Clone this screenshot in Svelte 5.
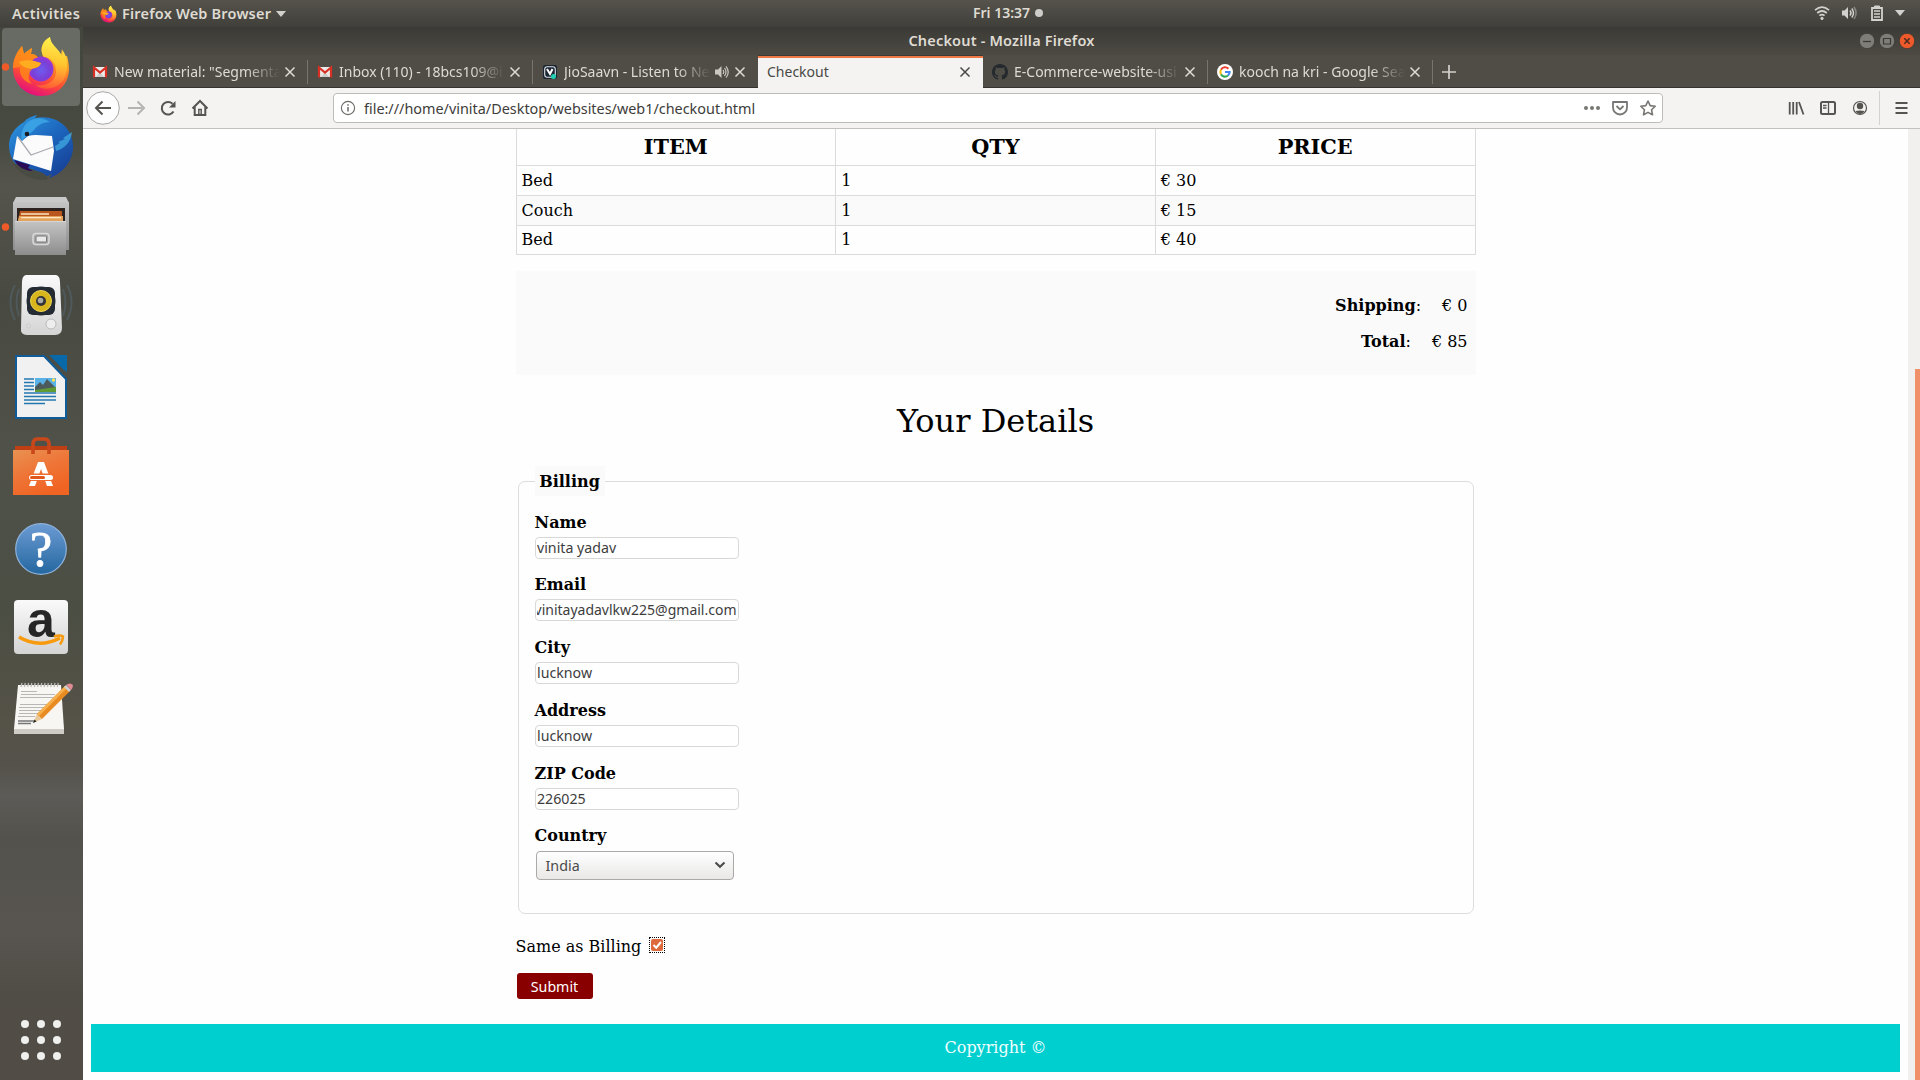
<script>
  const rows = [
    ['Bed', '1', '€ 30'],
    ['Couch', '1', '€ 15'],
    ['Bed', '1', '€ 40']
  ];
  const fields = [
    { label: 'Name', value: 'vinita yadav' },
    { label: 'Email', value: 'vinitayadavlkw225@gmail.com', end: true },
    { label: 'City', value: 'lucknow' },
    { label: 'Address', value: 'lucknow' },
    { label: 'ZIP Code', value: '226025' }
  ];
  const tabs = [
    { icon: 'gmail', title: 'New material: "Segmenta' },
    { icon: 'gmail', title: 'Inbox (110) - 18bcs109@i' },
    { icon: 'saavn', title: 'JioSaavn - Listen to Ne', audio: true },
    { title: 'Checkout', active: true },
    { icon: 'github', title: 'E-Commerce-website-usi' },
    { icon: 'google', title: 'kooch na kri - Google Sea' }
  ];
  const dots = [25, 41, 57];
  const spirals = Array.from({ length: 12 }, (_, i) => 21 + i * 3.3);
</script>

{#snippet firefox()}
  <path fill="url(#fxBody)" d="M41 96C27 96 13 85 13 68c0-8 3-15 9-22l2 8c3-3 5-4 8-6l-1 6c4 0 5 1 7 4l5-1c-3-9-1-16 7-20 0 7 7 12 11 18l1-6 3 7 2 0c2 7 2 12 2 14-1 15-12 26-28 26z" />
  <path fill="url(#fxTail)" d="M50 37c-8 5-11 13-6 20 7 0 13 7 12 16-1 9-11 14-20 12 8 7 24 4 29-8 4-10 2-21-2-26l-1 5C59 49 50 44 50 37z" />
  <circle cx="41" cy="69" r="12.5" fill="url(#fxGlobe)" />
  <path fill="#ff8a18" d="M13 68c0-8 3-15 9-22l2 8c3-3 5-4 8-6l-1 6c3 0 6 2 7 4-4 0-7 2-4 4l7 1c-1 4-5 5-9 6-4 5-5 10 0 15-10-3-13-11-12-17z" opacity=".8" />
  <path fill="#ffad20" d="M19 62c6-3 15-2 22 1-1 4-6 5-10 6-5-1-10-3-12-7z" />
{/snippet}

{#snippet triangle()}
  <svg class="tri" width="10" height="6" viewBox="0 0 10 6"><path d="M0 0h10L5 6z" fill="#d3d1cd" /></svg>
{/snippet}

{#snippet favicon(name)}
  {#if name === 'gmail'}
    <svg class="fav" width="16" height="16" viewBox="0 0 16 16">
      <path fill="#eceae8" d="M1 3h14v10H1z" /><path fill="#cfcdcb" d="M4 13l4-5 4 5z" />
      <path fill="none" stroke="#d93025" stroke-width="2.2" d="M2 13.5V3.5l6 5 6-5v10" />
    </svg>
  {:else if name === 'saavn'}
    <svg class="fav" width="16" height="16" viewBox="0 0 16 16">
      <rect x="1" y="1" width="14" height="14" rx="2" fill="#1c2533" />
      <rect x="2.7" y="2.7" width="10.6" height="10.6" rx="2.5" fill="none" stroke="#dbe3e8" stroke-width="1.1" />
      <path fill="none" stroke="#fff" stroke-width="2" d="M5 5l3 5 2.500-5" /><circle cx="11.500" cy="12.500" r="2.500" fill="#1ecfb2" />
    </svg>
  {:else if name === 'github'}
    <svg class="fav" width="16" height="16" viewBox="0 0 16 16">
      <path fill="#24292e" d="M8 0C3.58 0 0 3.58 0 8c0 3.54 2.29 6.53 5.47 7.59.4.07.55-.17.55-.38 0-.19-.01-.82-.01-1.49-2.01.37-2.53-.49-2.69-.94-.09-.23-.48-.94-.82-1.13-.28-.15-.68-.52-.01-.53.63-.01 1.08.58 1.23.82.72 1.21 1.87.87 2.33.66.07-.52.28-.87.51-1.07-1.78-.2-3.64-.89-3.64-3.95 0-.87.31-1.59.82-2.15-.08-.2-.36-1.02.08-2.12 0 0 .67-.21 2.2.82a7.6 7.6 0 0 1 4 0c1.53-1.04 2.2-.82 2.2-.82.44 1.1.16 1.92.08 2.12.51.56.82 1.27.82 2.15 0 3.07-1.87 3.75-3.65 3.95.29.25.54.73.54 1.48 0 1.07-.01 1.93-.01 2.2 0 .21.15.46.55.38A8 8 0 0 0 16 8c0-4.42-3.58-8-8-8z" />
    </svg>
  {:else if name === 'google'}
    <svg class="fav" width="16" height="16" viewBox="0 0 16 16">
      <circle cx="8" cy="8" r="8" fill="#fff" />
      <g fill="none" stroke-width="2.1">
        <path stroke="#ea4335" d="M11.4 4.7A4.6 4.6 0 0 0 4 5.7" /><path stroke="#fbbc05" d="M4 5.7a4.6 4.6 0 0 0 0 4.7" />
        <path stroke="#34a853" d="M4 10.4a4.6 4.6 0 0 0 7 1.1" /><path stroke="#4285f4" d="M11 11.5A4.6 4.6 0 0 0 12.6 8H8" />
      </g>
    </svg>
  {/if}
{/snippet}

<svg width="0" height="0" class="defs">
  <defs>
    <linearGradient id="fxBody" x1=".8" y1="0" x2=".4" y2="1">
      <stop offset="0" stop-color="#ffe846" /><stop offset=".4" stop-color="#ff9a20" /><stop offset=".72" stop-color="#ff4a36" /><stop offset="1" stop-color="#e4107c" />
    </linearGradient>
    <linearGradient id="fxTail" x1=".5" y1="0" x2=".4" y2="1">
      <stop offset="0" stop-color="#fff14f" /><stop offset=".5" stop-color="#ffc52e" /><stop offset="1" stop-color="#ff5a35" />
    </linearGradient>
    <radialGradient id="fxGlobe" cx=".5" cy=".55" r=".6">
      <stop offset="0" stop-color="#6f5cf0" /><stop offset=".6" stop-color="#7a3fd6" /><stop offset="1" stop-color="#a832d8" />
    </radialGradient>
    <linearGradient id="tb" x1="0" y1="0" x2=".8" y2="1">
      <stop offset="0" stop-color="#2f9be0" /><stop offset=".5" stop-color="#1d68c0" /><stop offset="1" stop-color="#173f95" />
    </linearGradient>
    <linearGradient id="steel" x1="0" y1="0" x2="0" y2="1"><stop offset="0" stop-color="#c4c4c4" /><stop offset="1" stop-color="#8d8d8d" /></linearGradient>
    <linearGradient id="pale" x1="0" y1="0" x2="0" y2="1"><stop offset="0" stop-color="#fafafa" /><stop offset="1" stop-color="#d4d4d4" /></linearGradient>
    <linearGradient id="bag" x1="0" y1="0" x2=".5" y2="1"><stop offset="0" stop-color="#e89252" /><stop offset=".5" stop-color="#ee7638" /><stop offset="1" stop-color="#f06423" /></linearGradient>
    <linearGradient id="help" x1="0" y1="0" x2="0" y2="1"><stop offset="0" stop-color="#6c9bd3" /><stop offset="1" stop-color="#2467a0" /></linearGradient>
  </defs>
</svg>

<div class="desktop">
  <header class="topbar">
    <span class="act">Activities</span>
    <span class="app">
      <svg width="17" height="20" viewBox="11 35 60 62">{@render firefox()}</svg>
      <span class="appname">Firefox Web Browser</span>
      {@render triangle()}
    </span>
    <span class="clock">Fri 13:37 <i></i></span>
    <span class="status">
      <svg width="16" height="16" viewBox="0 0 16 16" fill="none" stroke="#d3d1cd" stroke-width="1.7">
        <path d="M1 5.2q7-6 14 0M3.2 8q4.8-4 9.6 0M5.4 10.6q2.6-2 5.2 0" /><circle cx="8" cy="13.4" r="1.2" fill="#d3d1cd" stroke-width="1" />
      </svg>
      <svg width="16" height="16" viewBox="0 0 16 16" fill="none" stroke="#d3d1cd" stroke-width="1.5">
        <path d="M1 5.5h2.5L7 2v12L3.5 10.5H1z" fill="#d3d1cd" stroke="none" /><path d="M9 5.5q2 2.5 0 5M10.8 3.5q3.4 4.5 0 9" /><path d="M13 2q4.2 6 0 12" opacity=".45" />
      </svg>
      <svg class="battery" width="14" height="16" viewBox="0 0 14 16" fill="none" stroke="#d3d1cd">
        <path d="M2 3h10v12H2z" stroke-width="1.8" /><path d="M4.5 1h5v1.500h-5z" fill="#d3d1cd" /><path d="M4 6h6M4 9h6M4 12h6" stroke-width="1.500" />
      </svg>
      {@render triangle()}
    </span>
  </header>

  <div class="body">
    <nav class="dock">
      <svg width="83" height="80" viewBox="0 27 83 80">
        <rect x="2" y="28" width="78" height="78" rx="4" fill="#fff" fill-opacity=".2" />
        <circle cx="5.500" cy="67" r="3.700" fill="#ef5a28" />
        {@render firefox()}
      </svg>
      <svg width="83" height="80" viewBox="0 107 83 80">
        <path fill="url(#tb)" d="M24 122c3-4 8-6 13-7l-2 3c20-4 37 8 38 27 1 13-8 28-24 33l3-4-7 3c-18 0-36-11-36-32 0-9 6-18 15-23z" />
        <path fill="#494c43" d="M13 163l30 10 6 5-4 2c-14 0-26-6-32-17z" />
        <path fill="#2b0b55" d="M14 160l16 5-2 3 5 3c-8 0-15-4-19-11z" />
        <path fill="#fbfbfc" d="M17 136l5 5 6-5c8-2 16 0 24 0l2 15-3 20-38-12z" />
        <path fill="none" stroke="#a9abb0" stroke-width="1.300" d="M18 137l13 18 22-8" />
        <path fill="#3fa9e8" d="M22 141c-2-6 0-14 6-19 8-6 15-4 22 0-8 0-13 4-16 8-5 5-9 6-12 11z" opacity=".8" />
        <path fill="#43b0e6" d="M72 132l-9 6 2 1-7 3 2 1-5 3 1 5c10-3 15-10 16-19z" opacity=".7" />
        <circle cx="27" cy="134" r="2.300" fill="#1a1a22" />
      </svg>
      <svg width="83" height="80" viewBox="0 187 83 80">
        <circle cx="5.500" cy="227" r="3.700" fill="#ef5a28" />
        <path fill="#c9c9c9" d="M16 197h50l3 6H13z" /><path fill="url(#steel)" d="M13 202h56v48H13z" />
        <path fill="#2c2320" d="M17 208h48v14H17z" /><path fill="#b8561e" d="M20 211h42v10H18z" /><path fill="#e3a35c" d="M19 216h44v5H18z" />
        <path stroke="#fbe6c0" stroke-width="1.400" d="M21 217.600h40M21 214h28" />
        <path fill="url(#steel)" d="M15 221h51v34H15z" /><path stroke="#d5d5d5" d="M15 221.500h51" />
        <rect x="33" y="233.500" width="16" height="11" rx="3" fill="none" stroke="#d9d9d9" stroke-width="1.500" /><rect x="36" y="236" width="10.500" height="6" rx="1" fill="#e8e8e8" stroke="#777" />
      </svg>
      <svg width="83" height="80" viewBox="0 267 83 80">
        <g fill="none" stroke="#5d7893" stroke-width="2" opacity=".32"><path d="M15 285q-9 17 0 35M67 285q9 17 0 35M19 289q-5 13 0 27M63 289q5 13 0 27" /></g>
        <path fill="url(#pale)" d="M26 275h30q4 1 4 7l2 46q0 7-7 7H27q-7 0-6-7l1-46q0-6 4-7z" />
        <rect x="27" y="287" width="28" height="28" rx="6" fill="#252b33" /><circle cx="41" cy="301" r="14.500" fill="#252b33" />
        <circle cx="41" cy="301" r="10.500" fill="#d8b51c" stroke="#f0d653" /><circle cx="41" cy="301" r="5" fill="#33343a" /><circle cx="40.500" cy="300.500" r="2.800" fill="#aaa" />
        <circle cx="51" cy="324" r="5" fill="#eee" stroke="#bbb" /><circle cx="28.500" cy="326" r="2" fill="#ddd" stroke="#ccc" />
      </svg>
      <svg width="83" height="80" viewBox="0 347 83 80">
        <path fill="#f1f1f1" stroke="#0f5c98" stroke-width="2" d="M16 356h28l22 23v39H16z" />
        <path fill="#0968a8" d="M49 355h18v17q-4-2-7-6z" />
        <path stroke="#2478b0" stroke-width="1.600" d="M24 379h10M24 382.500h10M24 386h10M24 389.500h10M24 393h32M24 396.500h32M24 400h32M24 403.500h21" />
        <path fill="#58b2e8" d="M35 378h21v14H35z" /><path fill="#4c5a5c" d="M35 387l5-5 3 3 4-6 9 9v3H35z" /><path fill="#5f9a35" d="M35 390l21-3v5H35z" /><circle cx="53.500" cy="380" r="1.700" fill="#ffe04a" />
      </svg>
      <svg width="83" height="80" viewBox="0 427 83 80">
        <path fill="#bf3f14" d="M15 446h52v6H15z" /><path fill="url(#bag)" d="M13 450h56v45H13z" />
        <path fill="none" stroke="#c9481b" stroke-width="3.600" d="M33 454v-11q1-4 4-4h8q3 0 4 4v11" />
        <path fill="#fff" d="M38 462h6l9 24h-6l-6-17-6 17h-6z" /><path fill="#ef6b2e" d="M28 473.500h26v7.500H28z" /><rect x="29" y="475" width="24" height="5" rx="2.500" fill="#fff" /><rect x="30" y="476" width="15" height="3" rx="1.500" fill="#e3561c" />
      </svg>
      <svg width="83" height="80" viewBox="0 507 83 80">
        <circle cx="41" cy="549" r="25.300" fill="url(#help)" stroke="#8fb4dd" stroke-width="1.200" />
        <text x="41" y="565.500" text-anchor="middle" class="q">?</text>
      </svg>
      <svg width="83" height="80" viewBox="0 587 83 80">
        <rect x="14" y="600" width="54" height="54" rx="4" fill="url(#pale)" />
        <text x="41" y="637" text-anchor="middle" class="a">a</text>
        <path fill="none" stroke="#f79a0d" stroke-width="3.600" d="M19 637q20 12 41 1" /><path fill="none" stroke="#f79a0d" stroke-width="2.500" d="M54 636.500q6-2 9 0 0 4-3 8" />
      </svg>
      <svg width="83" height="80" viewBox="0 667 83 80">
        <path fill="#cfccc6" d="M14 728h50v6H14z" /><path fill="#f7f6f3" d="M18 685h43l3 44H14z" />
        {#each spirals as x}<path stroke="#bdbbb6" stroke-width="1.300" d="M{x} 687l1-4" />{/each}
        <path stroke="#b9b7b3" stroke-width="1" d="M21 691.500h16M21 694.500h34M20 697.500h34M20 704.500h30M19 707.500h30M19 710.500h26M19 713.500h22M18 716.500h17" /><path stroke="#777" stroke-width="1.300" d="M18 721h16M18 723.500h13" />
        <path fill="#e8c79a" d="M33 723l4-9 5 5z" /><path fill="#e98b23" d="M37 714l28-28 5 5-28 28z" /><path fill="#f7b04c" d="M37 714l28-28 2 2-28 28z" />
        <path fill="#d0d0d0" d="M64 687l2-2 5 5-2 2z" /><path fill="#e08a92" d="M66 685q4-3 7 0 0 3-2 5z" /><path fill="#222" d="M33 723l1.500-3.500 2 2z" />
      </svg>
      <svg class="grid" width="83" height="60" viewBox="0 1010 83 60" fill="#efefee">
        {#each dots as x}{#each dots as y}<circle cx={x} cy={y + 999} r="4" />{/each}{/each}
      </svg>
    </nav>

    <main class="window">
      <div class="titlebar">
        <span></span>
        <span class="wtitle">Checkout - Mozilla Firefox</span>
        <span class="wbtns">
          <svg width="16" height="16" viewBox="0 0 16 16"><circle cx="8" cy="8" r="7.700" fill="#7f7d77" stroke="#393832" stroke-width=".8" /><path d="M4 8.500h8" stroke="#3a3935" stroke-width="1.200" /></svg>
          <svg width="16" height="16" viewBox="0 0 16 16"><circle cx="8" cy="8" r="7.700" fill="#7f7d77" stroke="#393832" stroke-width=".8" /><path d="M4.500 5.500h7v5.500h-7z" fill="none" stroke="#3a3935" stroke-width="1.200" /></svg>
          <svg width="16" height="16" viewBox="0 0 16 16"><circle cx="8" cy="8" r="7.700" fill="#ee5a2b" stroke="#393832" stroke-width=".8" /><path d="M5.300 5.300l5.400 5.400M10.700 5.300l-5.400 5.400" stroke="#4a2b1e" stroke-width="1.500" /></svg>
        </span>
      </div>

      <div class="tabs">
        {#each tabs as t, i}
          <div class="tab" class:active={t.active} class:nosep={i === 2}>
            {@render favicon(t.icon)}
            <span class="ttl" class:fade={!t.active}>{t.title}</span>
            {#if t.audio}
              <svg class="audio" width="14" height="14" viewBox="0 0 14 14" fill="none" stroke="#c9c7c2" stroke-width="1.200"><path fill="#c9c7c2" stroke="none" d="M0 4.500h3L6.500 1v12L3 9.500H0z" /><path d="M8 5q1.500 2 0 4M9.500 3q3 4 0 8M11 1.300q4.500 5.700 0 11.400" /></svg>
            {/if}
            <svg class="x" width="12" height="12" viewBox="0 0 12 12"><path d="M1.500 1.500l9 9M10.500 1.500l-9 9" fill="none" stroke="currentColor" stroke-width="1.500" /></svg>
          </div>
        {/each}
        <svg class="plus" width="16" height="16" viewBox="0 0 16 16"><path d="M8 1v14M1 8h14" stroke="#d3d1cd" stroke-width="1.700" /></svg>
      </div>

      <div class="toolbar">
        <svg class="nav" width="134" height="40" viewBox="83 88 134 40" fill="none" stroke="#555450" stroke-width="2">
          <circle cx="103" cy="108" r="16.300" fill="#fdfdfd" stroke="#a9a7a4" stroke-width="1" />
          <path d="M111 108H97M102.500 101.500L96 108l6.500 6.500" />
          <path d="M128 108h14M137.500 101.500l6.500 6.500-6.500 6.500" stroke="#b5b3b0" />
          <path d="M173.500 111.500a6.300 6.300 0 1 1-1-7.800" /><path d="M175.500 101v6.500H169z" fill="#555450" stroke="none" />
          <path d="M192.500 108.500L200 101l7.500 7.500M194.700 107v8h10.600v-8" /><path d="M198.800 109.500h2.400v5h-2.400z" stroke-width="1.400" />
        </svg>
        <div class="url">
          <svg width="16" height="16" viewBox="0 0 16 16" fill="none" stroke="#6b6a67" stroke-width="1.100"><circle cx="8" cy="8" r="6.600" /><path d="M8 7v4.500M8 4.200v1.500" stroke-width="1.500" /></svg>
          <span class="addr">file:///home/vinita/Desktop/websites/web1/checkout.html</span>
          <svg width="76" height="20" viewBox="1582 98 76 20" fill="none" stroke="#777673" stroke-width="1.800">
            <g fill="#777673" stroke="none"><circle cx="1586" cy="108" r="2" /><circle cx="1592" cy="108" r="2" /><circle cx="1598" cy="108" r="2" /></g>
            <path d="M1613 102h14v5.500a7 7 0 0 1-14 0zM1616.500 106l3.500 3.300 3.500-3.300" stroke-linejoin="round" />
            <path d="M1648 101l2.200 4.600 5 .7-3.600 3.500.9 5-4.500-2.400-4.500 2.400.9-5-3.600-3.500 5-.7z" stroke-linejoin="round" stroke-width="1.600" />
          </svg>
        </div>
        <svg class="tools" width="132" height="40" viewBox="1780 88 132 40" fill="none" stroke="#555450">
          <path d="M1789.700 102v12.500M1793.200 102v12.500M1796.700 102v12.500M1799 102l4.500 12.500" stroke-width="1.800" />
          <rect x="1821" y="102" width="14" height="12" rx="1.500" stroke-width="2" /><path d="M1828.500 102v12M1823 105.500h3.500M1823 108h3.500" stroke-width="1.300" />
          <circle cx="1860" cy="108" r="6.500" stroke-width="1.200" /><circle cx="1860" cy="106" r="3.200" fill="#555450" stroke="none" /><path d="M1855.500 111q4.500-1 9 0-1.500 3-4.500 3t-4.500-3z" fill="#555450" stroke="none" />
          <path d="M1879.500 91v34" stroke="#d4d2cf" /><path d="M1895.500 103h12M1895.500 108h12M1895.500 113h12" stroke-width="2" />
        </svg>
      </div>

      <div class="view">
        <div class="page">
          <div class="content">
            <table>
              <thead><tr><th>ITEM</th><th>QTY</th><th>PRICE</th></tr></thead>
              <tbody>
                {#each rows as r}<tr>{#each r as c}<td>{c}</td>{/each}</tr>{/each}
              </tbody>
            </table>
            <div class="totals">
              <p><span><b>Shipping</b>:</span><span>€ 0</span></p>
              <p><span><b>Total</b>:</span><span>€ 85</span></p>
            </div>
            <h2>Your Details</h2>
            <section class="billing">
              <div class="legend">Billing</div>
              {#each fields as f}
                <div class="field">
                  <b>{f.label}</b>
                  <div class="input" class:end={f.end}><span>{f.value}</span></div>
                </div>
              {/each}
              <div class="field country">
                <b>Country</b>
                <div class="select"><span>India</span><svg width="12" height="8" viewBox="0 0 12 8"><path d="M1.500 1.500L6 5.800l4.500-4.300" fill="none" stroke="#4a4a4a" stroke-width="2" /></svg></div>
              </div>
            </section>
            <div class="same">Same as Billing
              <span class="check"><svg width="12" height="12" viewBox="0 0 12 12"><rect width="12" height="12" rx="2" fill="#dd6a3c" /><path d="M2.500 6l2.700 2.700L10 3" fill="none" stroke="#fff" stroke-width="2" /></svg></span>
            </div>
            <button>Submit</button>
          </div>
          <footer>Copyright ©</footer>
        </div>
        <div class="scroll"><div class="thumb"></div></div>
      </div>
    </main>
  </div>
</div>

<style>
  :global(body) { margin: 0; overflow: hidden; }
  .defs { position: absolute; }
  svg { display: block; flex: none; }
  .desktop { width: 1920px; height: 1080px; display: flex; flex-direction: column; font-family: "Noto Sans", "Open Sans", sans-serif; overflow: hidden; }

  .topbar { height: 27px; flex: none; display: grid; grid-template-columns: 88px 885px 1fr auto; align-items: center; background: linear-gradient(#56534c, #403f3a); color: #dfdbd2; font-weight: 600; font-size: 14px; line-height: 27px; white-space: nowrap; }
  .act { padding-left: 12px; font-size: 14.5px; letter-spacing: .35px; }
  .app { display: flex; align-items: center; padding-left: 12px; gap: 5px; }
  .appname { font-size: 14.5px; letter-spacing: .2px; }
  .clock { display: flex; align-items: center; gap: 5px; height: 27px; line-height: 24px; padding-bottom: 1px; box-sizing: border-box; }
  .clock i { width: 8px; height: 8px; border-radius: 50%; background: #cfcdc9; }
  .status { display: flex; align-items: center; gap: 11px; padding-right: 15px; padding-bottom: 1px; }
  .battery { margin-left: 2px; }

  .body { flex: 1; display: flex; min-height: 0; }
  .dock { width: 83px; flex: none; display: flex; flex-direction: column;
    background: linear-gradient(180deg, #42463d 0, #464a40 10%, #55544c 15%, #484a41 26%, #50524a 40%, #4b4e43 55%, #555248 66%, #54524a 70%, #5d5b57 73%, #54524c 77%, #585550 86%, #504c46 92%, #514d46 100%); }
  .dock .grid { margin-top: auto; margin-bottom: 10px; }
  .q { font: 50px "Liberation Serif", serif; fill: #fff; stroke: #fff; stroke-width: .8; }
  .a { font: bold 50px "Liberation Sans", sans-serif; fill: #262626; }

  .window { flex: 1; display: flex; flex-direction: column; min-width: 0; background: #504d46; }
  .titlebar { height: 28px; flex: none; display: grid; grid-template-columns: 1fr auto 1fr; align-items: center; background: linear-gradient(#3b3a36, #4d4a43); }
  .wtitle { color: #dfdbd2; font-weight: 600; font-size: 14.5px; letter-spacing: .18px; line-height: 26px; height: 28px; }
  .wbtns { display: flex; gap: 4px; justify-content: flex-end; padding-right: 5px; }
  .tabs { height: 33px; flex: none; display: flex; align-items: center; box-shadow: inset 0 -1px #34332f; color: #dedbd5; font-size: 14px; }
  .tab { width: 225px; height: 33px; box-sizing: border-box; display: flex; align-items: center; padding: 0 12px 0 9px; position: relative; }
  .tab::after { content: ""; position: absolute; right: 0; top: 5px; height: 24px; width: 1px; background: #77746d; }
  .tab.active::after, .tab.nosep::after { display: none; }
  .tab.active { background: #f4f3f2; box-shadow: inset 0 1px #3b3a36, inset 0 3px #f07746; color: #4a4945; }
  .fav { margin-right: 6px; }
  .ttl { flex: 1; min-width: 0; white-space: nowrap; line-height: 33px; margin-right: 4px; }
  .ttl.fade { mask-image: linear-gradient(to left, transparent 0, #000 34px); }
  .audio { margin-right: 5px; }
  .plus { margin-left: 8px; }
  .toolbar { height: 40px; flex: none; display: flex; align-items: center; background: #f4f3f2; border-bottom: 1px solid #c3c1be; }
  .url { margin-left: 116px; width: 1330px; height: 30px; box-sizing: border-box; border: 1px solid #bebcb9; border-radius: 4px; background: #fff; display: flex; align-items: center; padding: 0 4px 0 6px; font-size: 14.4px; color: #3d3c3a; }
  .addr { flex: 1; margin-left: 8px; }
  .tools { margin-left: auto; margin-right: 8px; }

  .view { flex: 1; display: flex; min-height: 0; background: #fefefe; }
  .page { flex: 1; display: flex; flex-direction: column; padding: 0 8px; font: 16px/19px "DejaVu Serif", serif; color: #000; }
  .content { width: 960px; margin: 0 auto; display: flex; flex-direction: column; align-items: flex-start; }
  table { width: 960px; border-collapse: collapse; table-layout: fixed; }
  th { height: 36px; padding: 0; font-size: 20.8px; line-height: 34px; border: 1px solid #dbdbdb; border-top: 0; }
  td { border: 1px solid #dbdbdb; padding: 0 5px; height: 29px; line-height: 28px; }
  tbody tr:last-child td { height: 27px; line-height: 26px; padding-bottom: 1px; }
  tbody tr:nth-child(2) { background: #fafafa; }
  .totals { width: 960px; height: 104px; margin-top: 16px; box-sizing: border-box; padding: 17px 8px 0; background: #fafafa; }
  .totals p { margin: 0; display: flex; justify-content: flex-end; gap: 21px; line-height: 36px; }
  h2 { font-size: 32px; font-weight: 400; line-height: 38px; margin: 27px 0 0; align-self: center; }
  .billing { width: 956px; height: 433px; margin: 41px 0 0 2px; box-sizing: border-box; border: 1px solid #dcdcdc; border-radius: 7px; padding-left: 16px; }
  .legend { width: 70px; height: 30px; margin: -16px 0 14.6px; line-height: 31px; text-align: center; font-weight: 700; background: #fafafa; }
  .field { height: 62.75px; }
  .field b { display: block; height: 26px; line-height: 24px; }
  .country b { height: 26.4px; }
  .input { width: 204px; height: 22px; box-sizing: border-box; border: 1px solid #d8d8d8; border-radius: 4px; padding: 0 1px 0 1.5px; background: #fff; font: 14.2px/20px "Noto Sans", sans-serif; color: #3d3d3d; }
  .input span { display: flex; overflow: hidden; white-space: nowrap; }
  .input.end { font-size: 14px; }
  .input.end span { justify-content: flex-end; }
  .select { width: 198px; height: 29px; margin-left: 1px; box-sizing: border-box; border: 1px solid #a9a9a9; border-radius: 4px; background: linear-gradient(#fff, #e9e8e7); display: flex; align-items: center; justify-content: space-between; padding: 0 7px 0 9px; font: 14.3px/27px "Noto Sans", sans-serif; color: #4a4a4a; }
  .same { margin-top: 23px; height: 19px; display: flex; gap: 8px; }
  .check { width: 16px; height: 16px; box-sizing: border-box; border: 1px dotted #000; padding: 1px; }
  button { margin: 17px 0 0 1px; width: 76px; height: 26px; border: 0; border-radius: 3px; background: #890000; color: #fff; font: 14.2px/26px "Noto Sans", sans-serif; padding: 1px 0 0; }
  footer { margin-top: 25px; height: 48px; line-height: 47px; text-align: center; background: #00cfd0; color: #f0ffff; }
  .scroll { width: 12px; background: #f1f0ef; display: flex; justify-content: flex-end; align-items: flex-end; }
  .thumb { width: 5px; height: 711px; background: #f09069; }
</style>
